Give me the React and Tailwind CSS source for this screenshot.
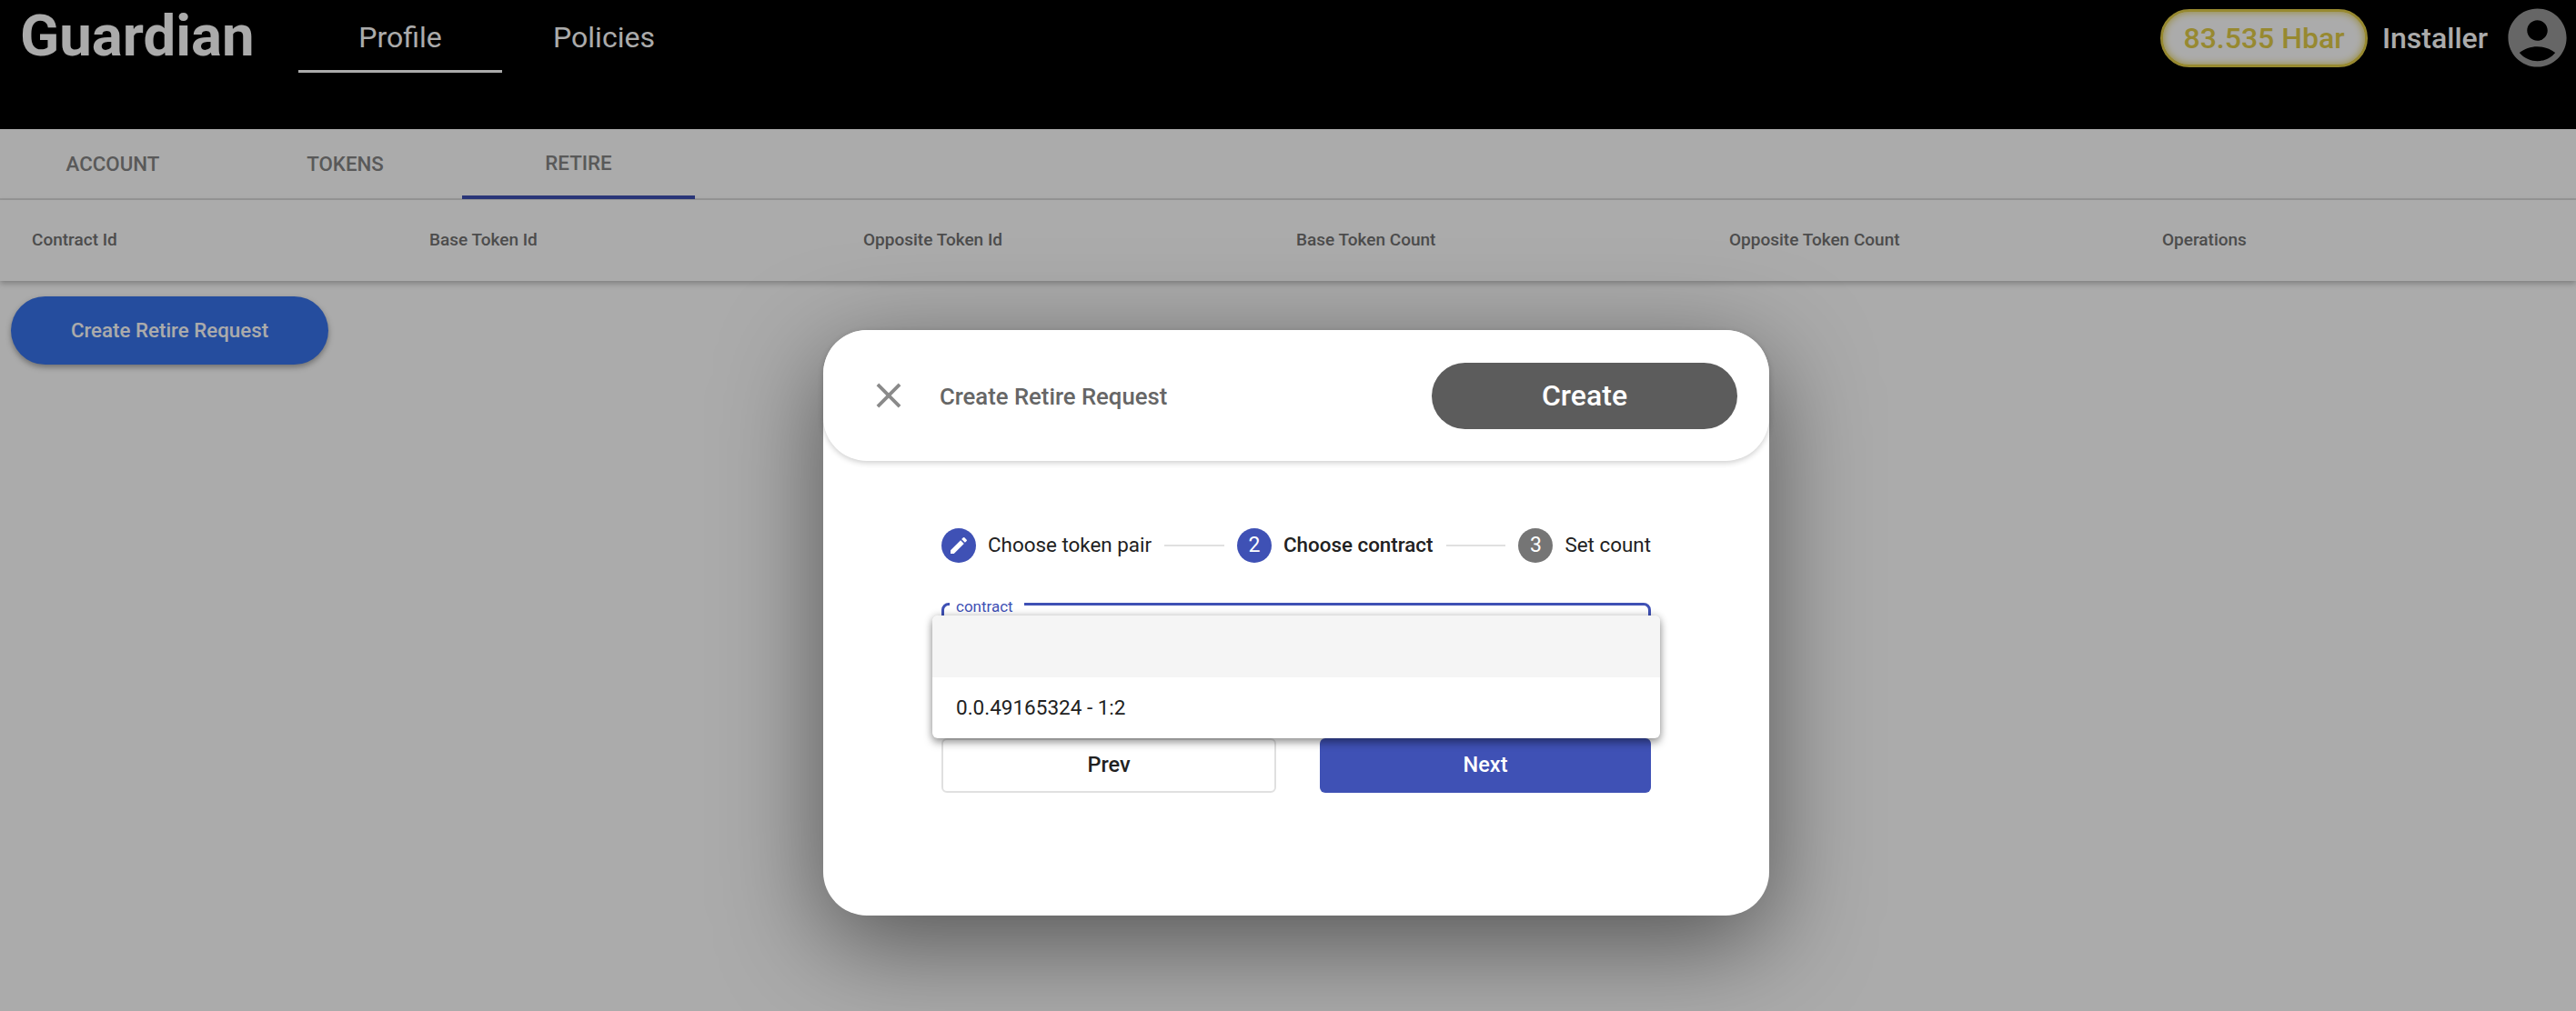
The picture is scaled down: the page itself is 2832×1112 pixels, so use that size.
import React from "react";

const columns = [
  { label: "Contract Id", width: "w-[437px]" },
  { label: "Base Token Id", width: "w-[477px]" },
  { label: "Opposite Token Id", width: "w-[476px]" },
  { label: "Base Token Count", width: "w-[476px]" },
  { label: "Opposite Token Count", width: "w-[476px]" },
  { label: "Operations", width: "w-[420px]" },
];

const Header = () => (
  <header className="h-[142px] bg-black flex items-start justify-between shrink-0">
    <div className="flex items-start">
      <div className="ml-[22px] mt-[2px] w-[306px] text-[63.5px] leading-[76px] font-bold text-white">
        Guardian
      </div>
      <div className="w-[224px] h-[80px] border-b-[3px] border-white text-white text-[32px] leading-[83px] text-center">
        Profile
      </div>
      <div className="w-[224px] text-white text-[32px] leading-[83px] text-center">
        Policies
      </div>
    </div>
    <div className="flex items-center mt-[3px] mr-[4px]">
      <div className="w-[228px] h-[64px] rounded-full border-[3px] border-[#e2cc48] bg-white shadow-[inset_0_0_8px_#e2cc48] text-[#e2cc48] text-[32px] font-medium flex items-center justify-center">
        83.535 Hbar
      </div>
      <div className="ml-[16px] text-white text-[32px] font-medium">Installer</div>
      <svg viewBox="0 0 24 24" className="w-[77px] h-[77px] ml-[16px] fill-[#999]">
        <path d="M12 2C6.48 2 2 6.48 2 12s4.48 10 10 10 10-4.48 10-10S17.52 2 12 2zm0 4c1.93 0 3.5 1.57 3.5 3.5S13.93 13 12 13s-3.5-1.57-3.5-3.5S10.07 6 12 6zm0 14c-2.03 0-4.43-.82-6.14-2.88C7.55 15.8 9.68 15 12 15s4.45.8 6.14 2.12C16.43 19.18 14.03 20 12 20z" />
      </svg>
    </div>
  </header>
);

const Tabs = () => (
  <div className="h-[78px] flex border-b-[2px] border-[#e0e0e0] text-[22.3px] font-medium text-[#858585]">
    <div className="w-[248px] flex items-center justify-center pt-[2px]">ACCOUNT</div>
    <div className="w-[260px] flex items-center justify-center pl-[3px] pt-[2px]">TOKENS</div>
    <div className="w-[256px] h-[77px] flex items-center justify-center pt-[2px] border-b-[4px] border-[#3f51b5]">
      RETIRE
    </div>
  </div>
);

const Step = ({ icon, label, active, done }) => (
  <div className="flex items-center">
    <div
      className={`w-[38px] h-[38px] rounded-full flex items-center justify-center text-white text-[23px] ${
        active || done ? "bg-[#3f51b5]" : "bg-[#757575]"
      }`}
    >
      {icon}
    </div>
    <span className={`ml-[13px] text-[22.4px] text-[#212121] whitespace-nowrap ${active ? "font-medium" : ""}`}>
      {label}
    </span>
  </div>
);

const Dialog = () => (
  <div className="w-[1040px] h-[644px] bg-white rounded-[48px] shadow-[0_30px_110px_rgba(0,0,0,0.5)]">
    <div className="h-[144px] rounded-[48px] bg-white shadow-[0_2px_6px_rgba(0,0,0,0.2)] flex items-center pl-[49px] pr-[35px]">
      <svg viewBox="0 0 24 24" className="w-[46px] h-[46px] fill-[#8a8a8a] shrink-0">
        <path d="M19 6.41 17.59 5 12 10.59 6.41 5 5 6.41 10.59 12 5 17.59 6.41 19 12 13.41 17.59 19 19 17.59 13.41 12z" />
      </svg>
      <div className="ml-[33px] text-[25.7px] font-medium text-[#666] mt-[3px]">Create Retire Request</div>
      <div className="ml-auto w-[336px] h-[73px] rounded-full bg-[#5c5c5c] text-white text-[32px] font-medium flex items-center justify-center">
        Create
      </div>
    </div>

    <div className="px-[130px] pt-[74px]">
      <div className="flex items-center h-[38px]">
        <Step
          done
          icon={
            <svg viewBox="0 0 24 24" className="w-[24px] h-[24px] fill-white">
              <path d="M3 17.25V21h3.75L17.81 9.94l-3.75-3.75L3 17.25zM20.71 7.04c.39-.39.39-1.02 0-1.41l-2.34-2.34a.9959.9959 0 0 0-1.41 0l-1.83 1.83 3.75 3.75 1.83-1.83z" />
            </svg>
          }
          label="Choose token pair"
        />
        <div className="flex-1 mx-[14px] h-[2px] bg-[#e0e0e0]" />
        <Step active icon="2" label="Choose contract" />
        <div className="flex-1 mx-[14px] h-[2px] bg-[#e0e0e0]" />
        <Step icon="3" label="Set count" />
      </div>

      <div className="relative mt-[44px] h-[149px]">
        {/* outlined field, most of it sits under the open menu */}
        <div className="h-[60px] rounded-[8px] border-[3px] border-[#3f51b5]" />
        <span className="absolute left-[9px] top-[-7px] pl-[7px] pr-[12px] bg-white text-[17px] leading-[22px] text-[#3f51b5]">
          contract
        </span>
        <div className="absolute left-[-10px] right-[-10px] top-[14px] h-[135px] rounded-[6px] bg-white overflow-hidden shadow-[0_5px_10px_rgba(0,0,0,0.35),0_0_8px_rgba(0,0,0,0.2)] z-10">
          <div className="h-[68px] bg-[#f5f5f5]" />
          <div className="h-[67px] flex items-center pl-[26px] text-[22.5px] text-[#212121]">0.0.49165324 - 1:2</div>
        </div>
      </div>

      <div className="flex justify-between">
        <div className="w-[368px] h-[60px] rounded-[6px] border-[2px] border-[#e0e0e0] flex items-center justify-center text-[23.5px] font-medium text-[#212121]">
          Prev
        </div>
        <div className="w-[364px] h-[60px] rounded-[6px] bg-[#3f51b5] flex items-center justify-center text-[23.5px] font-medium text-white">
          Next
        </div>
      </div>
    </div>
  </div>
);

export default function App() {
  return (
    <div className="relative h-[1112px] overflow-hidden bg-white flex flex-col font-['Roboto',sans-serif]">
      <Header />
      <Tabs />
      <div className="h-[89px] flex items-center pl-[35px] text-[19px] font-medium text-[#727272] shadow-[0_3px_6px_rgba(0,0,0,0.25)]">
        {columns.map((col) => (
          <div key={col.label} className={col.width}>
            {col.label}
          </div>
        ))}
      </div>
      <div className="mt-[17px] ml-[12px] w-[349px] h-[75px] rounded-full bg-[#3874ec] text-white text-[22.3px] font-medium flex items-center justify-center shadow-[0_3px_6px_rgba(0,0,0,0.35)]">
        Create Retire Request
      </div>

      {/* backdrop + modal */}
      <div className="absolute inset-0 bg-black/[0.33] flex justify-center items-start pt-[363px] pl-[18px]">
        <Dialog />
      </div>
    </div>
  );
}
